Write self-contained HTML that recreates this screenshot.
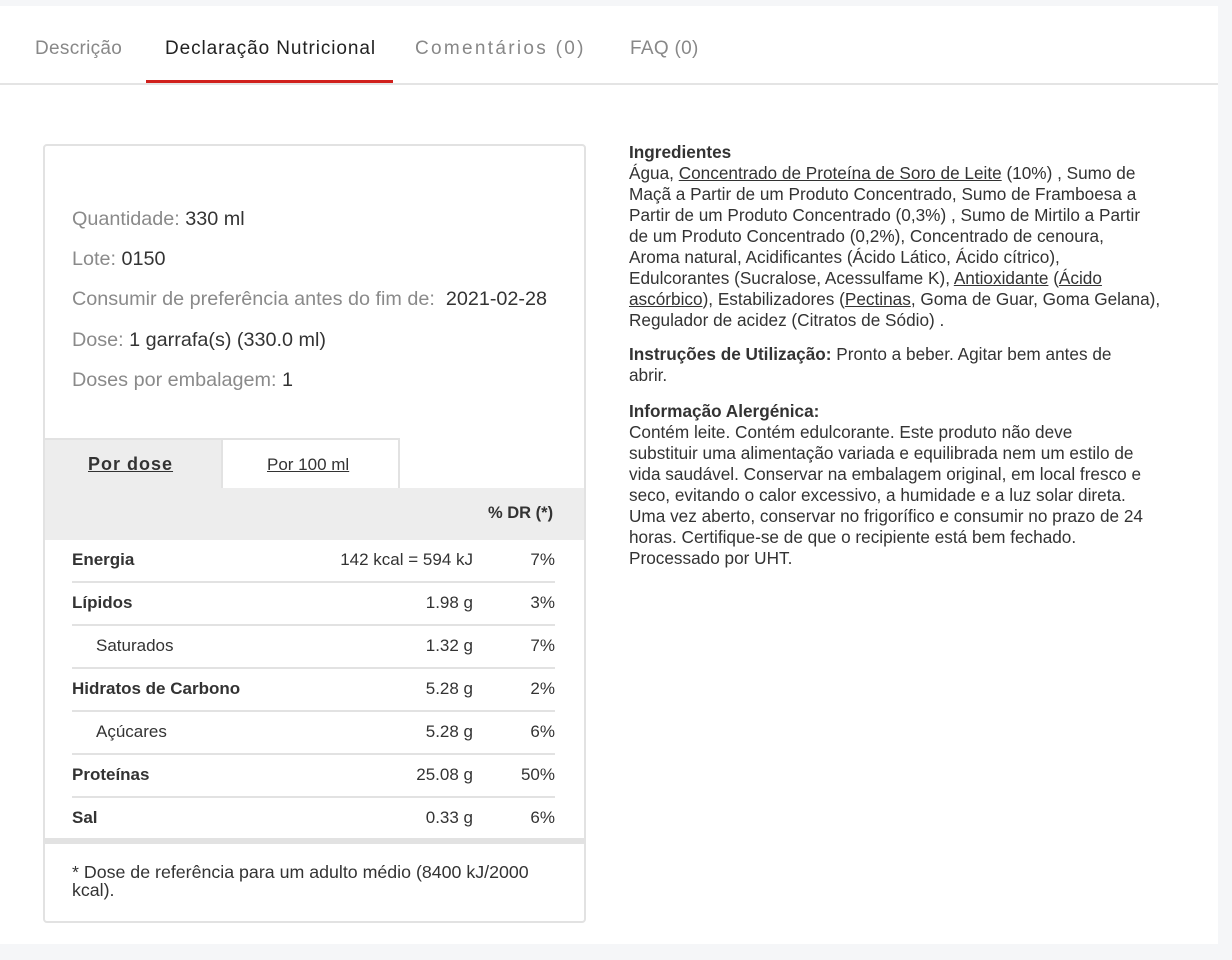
<!DOCTYPE html>
<html><head><meta charset="utf-8"><style>
*{margin:0;padding:0;box-sizing:border-box}
body{width:1232px;height:960px;background:#f5f6f8;font-family:"Liberation Sans",sans-serif;color:#333;position:relative;overflow:hidden}
.panel{position:absolute;left:0;top:6px;width:1218px;height:938px;background:#fff}
.abs{position:absolute;white-space:nowrap}
.tab{position:absolute;top:32px;font-size:19px;color:#888;letter-spacing:0.3px}
.sep{position:absolute;left:0;top:77px;width:1218px;height:2px;background:#e4e4e4}
.red{position:absolute;left:146px;top:74px;width:247px;height:3px;background:#d0201c}
.card{position:absolute;left:43px;top:138px;width:543px;height:779px;border:2px solid #e2e2e2;border-radius:4px;background:#fff}
.info{position:absolute;left:72px;font-size:19.8px;color:#333}
.info span{color:#8a8a8a}
.row{position:absolute;left:72px;width:483px;height:43px;font-size:17px;border-bottom:2px solid #e2e2e2}
.row .l{position:absolute;left:0;top:10px}
.row .v{position:absolute;right:82px;top:10px}
.row .p{position:absolute;right:0;top:10px}
.b{font-weight:bold;color:#333}
.r{position:absolute;left:629px;font-size:17.2px;line-height:21px;color:#333;white-space:nowrap}
u{text-decoration:underline}
</style></head><body>
<div class="panel">
<div class="tab" style="left:35px">Descrição</div>
<div class="tab" style="left:165px;color:#222;letter-spacing:0.9px">Declaração Nutricional</div>
<div class="tab" style="left:415px;letter-spacing:2.3px">Comentários (0)</div>
<div class="tab" style="left:630px">FAQ (0)</div>
<div class="sep"></div><div class="red"></div>
<div class="card"></div>
<div class="info abs" style="top:202px"><span>Quantidade:</span> 330 ml</div>
<div class="info abs" style="top:242px"><span>Lote:</span> 0150</div>
<div class="info abs" style="top:282px"><span>Consumir de preferência antes do fim de:</span>&nbsp; 2021-02-28</div>
<div class="info abs" style="top:323px"><span>Dose:</span> 1 garrafa(s) (330.0 ml)</div>
<div class="info abs" style="top:363px"><span>Doses por embalagem:</span> 1</div>
<div class="abs" style="left:45px;top:432px;width:176px;height:51px;background:#ededed;border-top:2px solid #e2e2e2"></div>
<div class="abs" style="left:221px;top:432px;width:179px;height:51px;background:#fff;border:2px solid #e2e2e2;border-bottom:none"></div>
<div class="abs" style="left:88px;top:448px;font-size:18px;font-weight:bold;letter-spacing:1px;text-decoration:underline;color:#333">Por dose</div>
<div class="abs" style="left:267px;top:449px;font-size:17px;text-decoration:underline">Por 100 ml</div>
<div class="abs" style="left:45px;top:482px;width:539px;height:52px;background:#ededed"></div>
<div class="abs" style="left:488px;top:498px;font-size:16.5px;font-weight:bold">% DR (*)</div>
<div class="row" style="top:534px"><div class="l b">Energia</div><div class="v">142 kcal = 594 kJ</div><div class="p">7%</div></div>
<div class="row" style="top:577px"><div class="l b">Lípidos</div><div class="v">1.98 g</div><div class="p">3%</div></div>
<div class="row" style="top:620px"><div class="l" style="left:24px">Saturados</div><div class="v">1.32 g</div><div class="p">7%</div></div>
<div class="row" style="top:663px"><div class="l b">Hidratos de Carbono</div><div class="v">5.28 g</div><div class="p">2%</div></div>
<div class="row" style="top:706px"><div class="l" style="left:24px">Açúcares</div><div class="v">5.28 g</div><div class="p">6%</div></div>
<div class="row" style="top:749px"><div class="l b">Proteínas</div><div class="v">25.08 g</div><div class="p">50%</div></div>
<div class="row" style="top:792px;border-bottom:none"><div class="l b">Sal</div><div class="v">0.33 g</div><div class="p">6%</div></div>
<div class="abs" style="left:45px;top:832px;width:539px;height:6px;background:#e2e2e2"></div>
<div class="abs" style="left:72px;top:857px;font-size:17.8px;line-height:18px">* Dose de referência para um adulto médio (8400 kJ/2000<br>kcal).</div>
<div class="r" style="top:136px"><span style="font-weight:bold">Ingredientes</span><br>Água, <u>Concentrado de Proteína de Soro de Leite</u> (10%) , Sumo de<br>Maçã a Partir de um Produto Concentrado, Sumo de Framboesa a<br>Partir de um Produto Concentrado (0,3%) , Sumo de Mirtilo a Partir<br>de um Produto Concentrado (0,2%), Concentrado de cenoura,<br>Aroma natural, Acidificantes (Ácido Lático, Ácido cítrico),<br>Edulcorantes (Sucralose, Acessulfame K), <u>Antioxidante</u> (<u>Ácido</u><br><u>ascórbico</u>), Estabilizadores (<u>Pectinas</u>, Goma de Guar, Goma Gelana),<br>Regulador de acidez (Citratos de Sódio) .</div>
<div class="r" style="top:338px"><b>Instruções de Utilização:</b> Pronto a beber. Agitar bem antes de<br>abrir.</div>
<div class="r" style="top:395px"><b>Informação Alergénica:</b><br>Contém leite. Contém edulcorante. Este produto não deve<br>substituir uma alimentação variada e equilibrada nem um estilo de<br>vida saudável. Conservar na embalagem original, em local fresco e<br>seco, evitando o calor excessivo, a humidade e a luz solar direta.<br>Uma vez aberto, conservar no frigorífico e consumir no prazo de 24<br>horas. Certifique-se de que o recipiente está bem fechado.<br>Processado por UHT.</div>
</div>
</body></html>
